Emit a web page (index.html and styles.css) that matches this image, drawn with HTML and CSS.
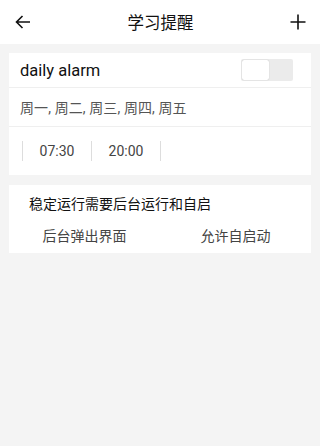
FILE: index.html
```html
<!DOCTYPE html>
<html lang="zh">
<head>
<meta charset="utf-8">
<link rel="stylesheet" href="styles.css">
</head>
<body>
<div class="page">
  <header class="topbar">
    <svg class="icon back" viewBox="0 0 16 16" width="16" height="16"><path d="M15 8H1.5M7.5 2L1.5 8l6 6" fill="none" stroke="#111" stroke-width="1.6"/></svg>
    <div class="title">学习提醒</div>
    <svg class="icon plus" viewBox="0 0 16 16" width="16" height="16"><path d="M8 0.5v15M0.5 8h15" fill="none" stroke="#111" stroke-width="1.6"/></svg>
  </header>
  <section class="card alarm">
    <div class="row head">
      <span class="name">daily alarm</span>
      <span class="toggle"><span class="knob"></span></span>
    </div>
    <div class="row days">周一, 周二, 周三, 周四, 周五</div>
    <div class="row times">
      <span class="time">07:30</span>
      <span class="time">20:00</span>
    </div>
  </section>
  <section class="card tips">
    <div class="tip-title">稳定运行需要后台运行和自启</div>
    <div class="tip-actions">
      <span class="action">后台弹出界面</span>
      <span class="action">允许自启动</span>
    </div>
  </section>
</div>
</body>
</html>
```
FILE: styles.css
```css
html, body { margin: 0; padding: 0; }
body {
  background: #f4f4f4;
  font-family: Roboto, "Noto Sans CJK SC", sans-serif;
  color: #222;
  width: 320px;
  height: 446px;
}
.topbar {
  height: 44px;
  background: #fff;
  display: flex;
  align-items: center;
  justify-content: space-between;
  padding: 0 14px 0 15px;
}
.icon { display: block; }
.title { font-size: 16.5px; color: #111; }
.card {
  background: #fff;
  margin: 9px 9px 0 9px;
  width: 302px;
}
.row { border-bottom: 1px solid #efefef; box-sizing: border-box; }
.head {
  height: 35px;
  display: flex;
  align-items: center;
  justify-content: space-between;
  padding: 0 18px 0 11px;
}
.name { font-size: 16.5px; color: #111; }
.toggle {
  width: 52px;
  height: 22px;
  background: #ebebeb;
  border-radius: 2px;
  display: flex;
  padding: 1px;
  box-sizing: border-box;
}
.knob {
  width: 27px;
  height: 20px;
  background: #fff;
  border-radius: 2px;
  box-shadow: 0 0 1px rgba(0,0,0,0.3);
}
.days {
  height: 39px;
  display: flex;
  align-items: center;
  padding-left: 11px;
  font-size: 14px;
  letter-spacing: 0.1px;
  color: #555;
}
.times {
  border-bottom: none;
  height: 48px;
  display: flex;
  align-items: center;
  padding-left: 13px;
}
.time {
  width: 68px;
  height: 20px;
  border-left: 1px solid #ddd;
  display: flex;
  align-items: center;
  justify-content: center;
  font-size: 14px;
  color: #444;
}
.time:last-child { border-right: 1px solid #ddd; }
.tips { height: 68px; margin-top: 10px; }
.tip-title {
  padding: 9px 0 0 20px;
  height: 20px;
  font-size: 14px;
  color: #111;
  line-height: 20px;
}
.tip-actions {
  display: flex;
  margin-top: 12px;
}
.action {
  flex: 1;
  text-align: center;
  font-size: 14px;
  color: #444;
  line-height: 20px;
}
```
